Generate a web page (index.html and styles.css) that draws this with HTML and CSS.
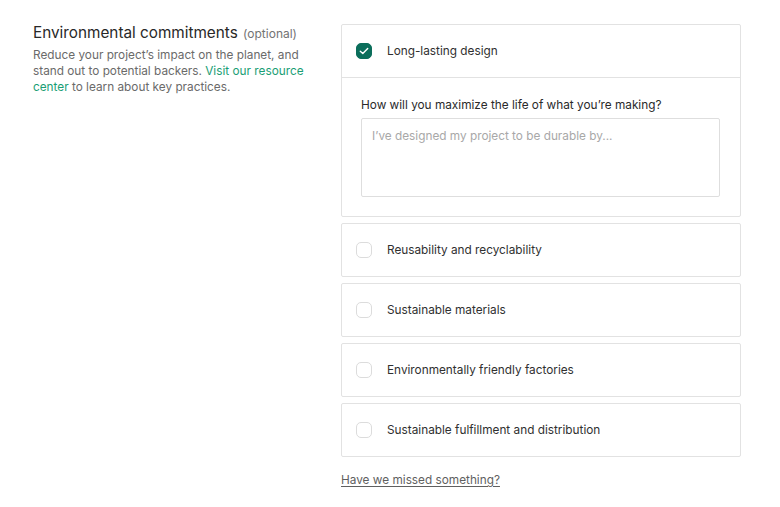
FILE: index.html
```html
<!DOCTYPE html>
<html>
<head>
<meta charset="utf-8">
<link rel="stylesheet" href="styles.css">
</head>
<body>
<div class="page">
  <div class="intro">
    <h2 class="title">Environmental commitments <span class="optional">(optional)</span></h2>
    <p class="desc">Reduce your project’s impact on the planet, and stand out to potential backers. <a class="link" href="#">Visit our resource center</a> to learn about key practices.</p>
  </div>
  <div class="options">
    <div class="card">
      <div class="row row-open">
        <span class="box checked">
          <svg width="10" height="8" viewBox="0 0 10 8"><path d="M1.3 4.2 L3.8 6.6 L8.7 1.4" fill="none" stroke="#fff" stroke-width="1.4" stroke-linecap="round" stroke-linejoin="round"/></svg>
        </span>
        <span class="label">Long-lasting design</span>
      </div>
      <div class="detail">
        <div class="question">How will you maximize the life of what you’re making?</div>
        <div class="textarea">I’ve designed my project to be durable by...</div>
      </div>
    </div>
    <div class="card"><div class="row"><span class="box"></span><span class="label">Reusability and recyclability</span></div></div>
    <div class="card"><div class="row"><span class="box"></span><span class="label">Sustainable materials</span></div></div>
    <div class="card"><div class="row"><span class="box"></span><span class="label">Environmentally friendly factories</span></div></div>
    <div class="card"><div class="row"><span class="box"></span><span class="label">Sustainable fulfillment and distribution</span></div></div>
    <a class="missed" href="#">Have we missed something?</a>
  </div>
</div>
</body>
</html>
```

FILE: styles.css
```css
* { box-sizing: border-box; }
html, body { margin: 0; padding: 0; background: #fff; }
body {
  font-family: Inter, "Noto Sans", sans-serif;
  color: #282828;
  width: 780px;
  height: 507px;
  overflow: hidden;
}
.page {
  display: grid;
  grid-template-columns: 277px 400px;
  column-gap: 31px;
  padding: 24px 0 0 33px;
}
.title {
  margin: 0;
  font-size: 15.3px;
  font-weight: 400;
  line-height: 18px;
  color: #282828;
}
.optional {
  font-size: 12px;
  color: #737373;
  margin-left: 1px;
}
.desc {
  margin: 4px 0 0;
  font-size: 11.8px;
  line-height: 16px;
  color: #6a6a6a;
}
.link { color: #1a9e75; text-decoration: none; }
.options {
  display: flex;
  flex-direction: column;
  gap: 6px;
  align-items: stretch;
}
.card {
  border: 1px solid #e2e2e2;
  border-radius: 2px;
  background: #fff;
}
.row {
  display: flex;
  align-items: center;
  gap: 15px;
  height: 52px;
  padding: 0 14px;
}
.row-open { height: 53px; border-bottom: 1px solid #e2e2e2; }
.box {
  width: 16px;
  height: 16px;
  border: 1px solid #dcdcdc;
  border-radius: 5px;
  display: flex;
  align-items: center;
  justify-content: center;
  flex: none;
  background: #fff;
}
.box.checked { background: #0b6e5b; border-color: #0b6e5b; }
.label { font-size: 11.8px; color: #303030; }
.detail { padding: 20px 20px 19px 19px; }
.question { font-size: 11.8px; line-height: 15px; color: #2a2a2a; }
.textarea {
  margin-top: 5px;
  height: 79px;
  border: 1px solid #dedede;
  border-radius: 2px;
  padding: 9px 10px;
  font-size: 11.8px;
  color: #a8a8a8;
  line-height: 16px;
}
.missed {
  margin-top: 10px;
  font-size: 11.8px;
  color: #5f5f5f;
  text-decoration: underline;
  text-underline-offset: 2px;
  align-self: flex-start;
}
```
